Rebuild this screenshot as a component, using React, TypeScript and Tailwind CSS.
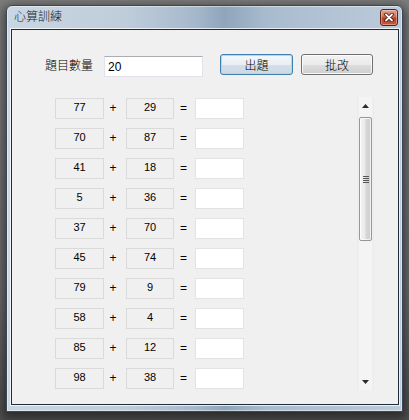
const rows: [number, number][] = [
  [77, 29],
  [70, 87],
  [41, 18],
  [5, 36],
  [37, 70],
  [45, 74],
  [79, 9],
  [58, 4],
  [85, 12],
  [98, 38],
];

const cjk = "font-['Noto_Sans_CJK_TC','Liberation_Sans',sans-serif] font-light";
const latin = "font-['Liberation_Sans','Noto_Sans_CJK_TC',sans-serif]";

function CloseButton() {
  return (
    <div className="mt-[3px] mr-[4px] flex h-[17px] w-[18px] items-center justify-center rounded-[3px] border border-[#5b2418] bg-[linear-gradient(180deg,#e6a08e_0%,#d06a52_45%,#b73f26_55%,#c95a3c_100%)] shadow-[inset_0_0_0_1px_rgba(255,255,255,0.35)]">
      <svg width="10" height="9" viewBox="0 0 10 9">
        <path d="M2 1.5 L8 7.5 M8 1.5 L2 7.5" stroke="#3b150c" strokeWidth="3.4" strokeLinecap="round" />
        <path d="M2 1.5 L8 7.5 M8 1.5 L2 7.5" stroke="#ffffff" strokeWidth="1.8" strokeLinecap="round" />
      </svg>
    </div>
  );
}

function ReadBox({ value, w }: { value: number; w: string }) {
  return (
    <div
      className={`flex h-[21px] ${w} items-center justify-center border border-[#dadada] bg-[#f0f0f0] pb-[2px] text-[11px] text-black ${latin}`}
    >
      {value}
    </div>
  );
}

function Scrollbar() {
  return (
    <div className="flex h-[293px] w-[17px] flex-col bg-[linear-gradient(90deg,#e9e9e9_0%,#f4f4f4_15%,#f4f4f4_85%,#e9e9e9_100%)]">
      <div className="flex h-[17px] items-center justify-center">
        <svg width="7" height="4" viewBox="0 0 7 4">
          <path d="M0 4 L3.5 0 L7 4 Z" fill="#2b2b2b" />
        </svg>
      </div>
      <div className="flex-1">
        <div className="mx-[2px] mt-[3px] flex h-[124px] items-center justify-center rounded-[2px] border border-[#969696] bg-[linear-gradient(90deg,#f4f4f4_0%,#e9e9e9_45%,#d6d6d6_55%,#cfcfcf_100%)] shadow-[inset_0_0_0_1px_rgba(255,255,255,0.7)]">
          <div className="flex flex-col gap-[1px]">
            <div className="h-[1px] w-[6px] bg-[#555]" />
            <div className="h-[1px] w-[6px] bg-[#555]" />
            <div className="h-[1px] w-[6px] bg-[#555]" />
            <div className="h-[1px] w-[6px] bg-[#555]" />
          </div>
        </div>
      </div>
      <div className="flex h-[17px] items-center justify-center">
        <svg width="7" height="4" viewBox="0 0 7 4">
          <path d="M0 0 L7 0 L3.5 4 Z" fill="#2b2b2b" />
        </svg>
      </div>
    </div>
  );
}

export default function App() {
  return (
    <div className="h-[420px] w-[409px] overflow-hidden bg-[linear-gradient(180deg,#7c7c7c_0%,#6a6a6a_70%,#4e4e4e_100%)] pl-[6px] pt-[5px]">
      {/* window frame */}
      <div className="flex h-[407px] w-[397px] flex-col rounded-t-[6px] border border-[#3b4753] bg-[linear-gradient(90deg,#c9d6e3_0%,#bfcddb_30%,#a5b8cb_48%,#8fa5bb_55%,#a9bccf_66%,#bccbda_100%)] shadow-[0_3px_10px_3px_rgba(0,0,0,0.45),inset_0_0_0_1px_rgba(255,255,255,0.45)]">
        {/* title bar */}
        <div className="flex h-[23px] items-start justify-between">
          <div className={`pl-[7px] pt-[3px] text-[12px] leading-[14px] text-[#1b1b1b] ${cjk}`}>心算訓練</div>
          <CloseButton />
        </div>

        {/* client area */}
        <div className="ml-[4px] mr-[3px] h-[376px] border border-[#1f2b37] bg-[#f0f0f0] shadow-[0_0_0_1px_rgba(255,255,255,0.75)]">
          <div className="mt-[24px] flex h-[23px] items-start">
            <div className={`ml-[33px] w-[59px] text-[12px] leading-[21px] text-black ${cjk}`}>題目數量</div>
            <div
              className={`mt-[2px] flex h-[21px] w-[99px] items-center border border-[#e2e3ea] border-t-[#abadb3] bg-white pl-[3px] text-[12px] text-black ${latin}`}
            >
              20
            </div>
            <div
              className={`ml-[17px] flex h-[21px] w-[73px] items-center justify-center rounded-[3px] border border-[#3c7fb1] bg-[linear-gradient(180deg,#f4f8fb_0%,#e8eef3_50%,#d4dee7_51%,#cdd8e2_100%)] text-[12px] text-black shadow-[inset_0_0_0_1px_#a6dcf5] ${cjk}`}
            >
              出題
            </div>
            <div
              className={`ml-[8px] flex h-[21px] w-[72px] items-center justify-center rounded-[3px] border border-[#707070] bg-[linear-gradient(180deg,#f2f2f2_0%,#ebebeb_50%,#dddddd_51%,#cfcfcf_100%)] text-[12px] text-black shadow-[inset_0_0_0_1px_rgba(255,255,255,0.8)] ${cjk}`}
            >
              批改
            </div>
          </div>

          <div className="mt-[20px] flex items-start">
            <div className="ml-[43px] flex w-[302px] flex-col gap-[9px] pt-[1px]">
              {rows.map(([a, b], i) => (
                <div key={i} className="flex h-[21px] items-center">
                  <ReadBox value={a} w="w-[49px]" />
                  <span className={`w-[20px] pb-[1px] pr-[2px] text-center text-[12px] text-black ${latin}`}>+</span>
                  <span className="w-[2px]" />
                  <ReadBox value={b} w="w-[48px]" />
                  <span className={`w-[21px] pb-[1px] pr-[2px] text-center text-[12px] text-black ${latin}`}>=</span>
                  <div className="h-[21px] w-[49px] border border-[#e3e3e3] bg-white" />
                </div>
              ))}
            </div>
            <Scrollbar />
          </div>
        </div>
      </div>
    </div>
  );
}
